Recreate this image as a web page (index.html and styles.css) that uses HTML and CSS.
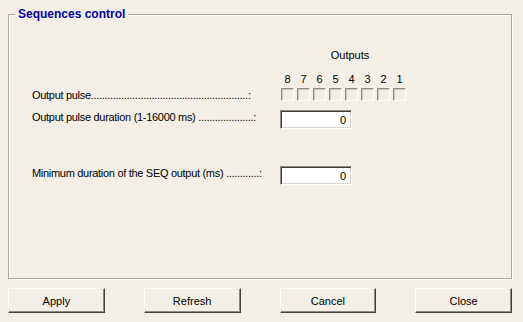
FILE: index.html
```html
<!DOCTYPE html>
<html lang="en">
<head>
<meta charset="UTF-8" />
<title>Sequences control</title>
<link rel="stylesheet" href="styles.css">
</head>
<body>
    <fieldset class="group">
        <legend>Sequences control</legend>

        <div class="form">
            <span></span>
            <div class="outputs-head">Outputs</div>

            <span></span>
            <div class="bits digits">
                <span>8</span><span>7</span><span>6</span><span>5</span>
                <span>4</span><span>3</span><span>2</span><span>1</span>
            </div>

            <label class="lbl row-pulse">Output pulse.........................................................:</label>
            <div class="bits row-pulse">
                <span class="chk"></span><span class="chk"></span><span class="chk"></span><span class="chk"></span>
                <span class="chk"></span><span class="chk"></span><span class="chk"></span><span class="chk"></span>
            </div>

            <label class="lbl row-dur">Output pulse duration (1-16000 ms) ....................:</label>
            <input class="num row-dur" type="text" value="0" />

            <label class="lbl row-min">Minimum duration of the SEQ output (ms) ............:</label>
            <input class="num row-min" type="text" value="0" />
        </div>
    </fieldset>

    <div class="buttons">
        <button>Apply</button>
        <button>Refresh</button>
        <button>Cancel</button>
        <button>Close</button>
    </div>
</body>
</html>
```

FILE: styles.css
```css
body {
    margin: 0;
    padding: 8px 11px 0 8px;
    background: #f4efe6;
    color: #000000;
    font-family: "Liberation Sans", Arial, sans-serif;
    font-size: 11px;
    width: 504px;
}

.group {
    margin: 0;
    padding: 0;
    height: 269px;
    border: 1px solid #aca899;
    box-shadow: inset 1px 1px 0 #ffffff, 1px 1px 0 #ffffff;
}

.group legend {
    margin-left: 6px;
    padding: 0 3px 0 3px;
    color: #0000a8;
    font-family: "Liberation Sans", Arial, sans-serif;
    font-weight: bold;
    font-size: 12px;
    line-height: 13px;
}

.form {
    display: grid;
    grid-template-columns: 249px auto;
    align-items: center;
    padding: 28px 0 0 23px;
}

.outputs-head {
    width: 126px;
    text-align: center;
    line-height: 13px;
    padding-left: 6px;
}

.bits {
    display: flex;
    gap: 3px;
    line-height: 13px;
}

.bits span {
    width: 13px;
    text-align: center;
}

.digits {
    margin-top: 11px;
}

.lbl {
    line-height: 13px;
    letter-spacing: -0.3px;
    white-space: nowrap;
}

.row-pulse {
    margin-top: 1px;
}

.lbl.row-pulse {
    margin-top: 3px;
}

.chk {
    box-sizing: border-box;
    height: 13px;
    background: #f1efea;
    border-top: 1px solid #8b8a85;
    border-left: 1px solid #8b8a85;
    border-right: 1px solid #ffffff;
    border-bottom: 1px solid #ffffff;
    box-shadow: inset 1px 1px 0 #c9c6bd;
}

.row-dur {
    margin-top: 8px;
}

.row-min {
    margin-top: 37px;
}

.lbl.row-dur, .lbl.row-min {
    align-self: start;
    margin-top: 9px;
}

.lbl.row-min {
    margin-top: 38px;
}

.num {
    box-sizing: border-box;
    width: 72px;
    height: 19px;
    margin-left: -1px;
    padding: 0 5px;
    text-align: right;
    font-family: "Liberation Sans", Arial, sans-serif;
    font-size: 11px;
    background: #ffffff;
    border-top: 1px solid #8a8983;
    border-left: 1px solid #8a8983;
    border-right: 1px solid #ffffff;
    border-bottom: 1px solid #ffffff;
    box-shadow: inset 1px 1px 0 #404040, inset -1px -1px 0 #d8d4cc;
    outline: none;
}

.buttons {
    display: flex;
    gap: 39px;
    margin-top: 9px;
}

.buttons button {
    box-sizing: border-box;
    width: 97px;
    height: 25px;
    padding: 0;
    background: #f4efe6;
    font-family: "Liberation Sans", Arial, sans-serif;
    font-size: 11px;
    color: #000000;
    border-top: 1px solid #ffffff;
    border-left: 1px solid #ffffff;
    border-right: 1px solid #404040;
    border-bottom: 1px solid #404040;
    box-shadow: inset -1px -1px 0 #8c8a84;
}
```
